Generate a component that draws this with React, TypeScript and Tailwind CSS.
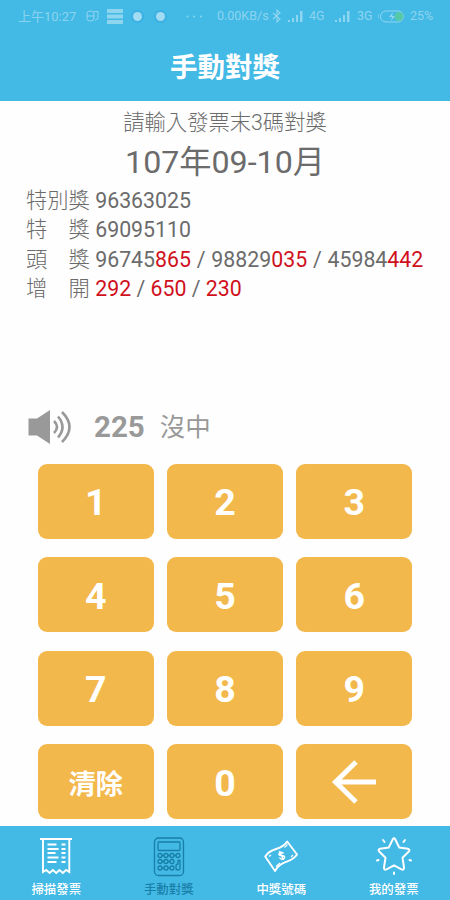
import type { ReactNode } from "react";

const keys = ["1", "2", "3", "4", "5", "6", "7", "8", "9", "清除", "0", "back"];

const Red = ({ children }: { children: ReactNode }) => <span className="text-[#d0101c]">{children}</span>;

const Slash = () => <span className="mx-[0.500px]"> / </span>;

const Signal = () => (
  <svg width="16" height="12" viewBox="0 0 16 12" fill="currentColor">
    <path d="M0 10h2v2H0zM4 8h2v4H4zM8 5h2v7H8zM12 1h2.5v11H12z" />
  </svg>
);

const StatusBar = () => (
  <div className="flex h-[32px] items-center pl-[18px] text-[13px] leading-none text-white/40">
    <span className="w-[68px] whitespace-nowrap">上午10:27</span>
    <svg className="mr-2" width="13" height="12" viewBox="0 0 13 12" fill="none" stroke="currentColor">
      <rect x="1" y="1" width="7" height="10" rx="3" />
      <path d="M1 6h7M8 1.500h4v7l-3 2" />
    </svg>
    <svg width="16" height="15" viewBox="0 0 16 15" fill="currentColor">
      <path d="M0 0h16v4H0zM0 5.500h16v4H0zM0 11h16v4H0z" />
    </svg>
    <span className="ml-[10px] h-[9px] w-[9px] rounded-full bg-white/50 ring-2 ring-[#3bb0e2]" />
    <span className="ml-[14px] h-[9px] w-[9px] rounded-full bg-white/50 ring-2 ring-[#3bb0e2]" />
    <svg className="ml-[21px]" width="17" height="3" viewBox="0 0 17 3" fill="currentColor">
      <circle cx="1.500" cy="1.500" r="1" />
      <circle cx="8" cy="1.500" r="1" />
      <circle cx="15" cy="1.500" r="1" />
    </svg>
    <span className="ml-[14px] w-[53px] whitespace-nowrap text-[12.500px]">0.00KB/s</span>
    <svg className="mr-1.5 ml-0.5" width="10" height="14" viewBox="0 0 10 14" fill="none" stroke="currentColor" strokeWidth="1.200">
      <path d="M1 4l7 6-3 3V1l3 3-7 6" />
    </svg>
    <Signal />
    <span className="ml-[5px] w-[26px] text-[12.500px]">4G</span>
    <Signal />
    <span className="ml-[6px] w-[21px] text-[12.500px]">3G</span>
    <svg width="28" height="13" viewBox="0 0 28 13" fill="none">
      <rect x="2.500" y="1" width="23" height="11" rx="5.500" stroke="currentColor" />
      <path d="M0 4v5" stroke="currentColor" />
      <circle cx="21" cy="6.500" r="4.500" fill="#55c9a9" />
      <path d="M15 2l-4 5h3l-1 4 4-5h-3z" fill="currentColor" />
    </svg>
    <span className="ml-[4px] text-[12.500px]">25%</span>
  </div>
);

const ReceiptIcon = () => (
  <svg width="34" height="40" viewBox="0 0 34 40" fill="none" stroke="currentColor" strokeWidth="1.900">
    <path d="M1 2h32M4 2v33l3.300-2 3.300 3 3.300-3 3.300 3 3.300-3 3.300 3 3.300-3 3.200 2V2" />
    <path d="M8.500 7.500h9M8.500 12h11M8.500 16h8M8.500 20.500h11M8.500 25h9" />
    <path d="M22.500 7.500h4M22.500 12h4M22.500 16h4M22.500 20.500h4M22.500 25h4" />
  </svg>
);

const CalculatorIcon = () => (
  <svg width="34" height="40" viewBox="0 0 34 40" fill="none" stroke="currentColor" strokeWidth="1.300">
    <rect x="2.500" y="1" width="29" height="37.500" rx="4" />
    <rect x="6" y="5" width="22" height="8.500" rx="1" />
    {[18.5, 24.5, 31].map((cy) =>
      [8, 14, 20].map((cx) => <circle key={`${cx}-${cy}`} cx={cx} cy={cy} r="2" />),
    )}
    <path d="M10 18.500h2M16 18.500h2M22 18.500h2M10 24.500h2M16 24.500h2M10 31h2M16 31h2" />
    <circle cx="26" cy="18.500" r="2" />
    <path d="M28 23.500v7.500a2 2 0 0 1-4 0v-2a2 2 0 0 1 2-2v-3.500z" />
  </svg>
);

const MoneyIcon = () => (
  <svg width="34" height="40" viewBox="0 0 34 40" fill="none" stroke="currentColor" strokeWidth="1.900" strokeLinejoin="round">
    <path d="M1.200 19.500C7 9.500 17 14.500 23.200 4.500L33 17.500C27 27 17 22.500 11 34Z" />
    <path d="M5 19.500l2-1.500M20.500 10.500l3-3M27 20l2-2M12 29.500l4-3.500" strokeWidth="1.200" />
    <path d="M19.500 16.500c-1.500-2-5-1-4.500 1s5 0 5.500 2.500-4 3-5 .5M15.500 14l4 9" strokeWidth="1.500" />
  </svg>
);

const StarIcon = () => (
  <svg width="38" height="40" viewBox="0 0 38 40" fill="none" stroke="currentColor" strokeWidth="2" strokeLinecap="round" strokeLinejoin="round">
    <path d="M17.800 2.200Q19 .300 20.200 2.200L24.300 10.600 32.800 11.700Q35.500 12.500 33.800 14.500L27.500 20.700 29 30.500Q29 33.500 26.500 32.300L19 28.300 11.500 32.300Q9 33.500 9 30.500L10.500 20.700 4.200 14.500Q2.500 12.500 5.200 11.700L13.700 10.600Z" />
    <path d="M8 3l1.500 2M30 3l-1.500 2M2 23.500l1.500-.5M36 23.500l-1.500-.5M19 35.500v1.500" />
  </svg>
);

const tabs = [
  { label: "掃描發票", icon: <ReceiptIcon /> },
  { label: "手動對獎", icon: <CalculatorIcon />, active: true },
  { label: "中獎號碼", icon: <MoneyIcon /> },
  { label: "我的發票", icon: <StarIcon /> },
];

const App = () => {
  return (
    <div className="flex h-[900px] w-[450px] flex-col overflow-hidden bg-[#fefefe] font-[Roboto,'Noto_Sans_CJK_TC',sans-serif] text-[#6b6b6b]">
      <header className="h-[100.500px] shrink-0 bg-[#43b9e5]">
        <StatusBar />
        <h1 className="mt-[16px] text-center text-[27.500px] leading-[40px] font-bold text-white">手動對獎</h1>
      </header>

      <section className="h-[303px] shrink-0 pt-[6px]">
        <p className="text-center text-[21.300px] leading-[32px] font-light">請輸入發票末3碼對獎</p>
        <h2 className="mt-[3px] text-center text-[32.200px] leading-[40px]">107年09-10月</h2>
        {/* Winning numbers */}
        <div className="mt-[4px] pl-[26px] text-[21.300px] leading-[29.600px] whitespace-pre">
          <p><span className="font-light">特別獎</span> 96363025</p>
          <p><span className="font-light">特　獎</span> 69095110</p>
          <p>
            <span className="font-light">頭　獎</span> 96745<Red>865</Red><Slash />98829<Red>035</Red><Slash />45984<Red>442</Red>
          </p>
          <p>
            <span className="font-light">增　開</span> <Red>292</Red> / <Red>650</Red> / <Red>230</Red>
          </p>
        </div>
      </section>

      <div className="flex h-[60px] shrink-0 items-center pb-[13px] pl-[28px] text-[#999]">
        <svg width="44" height="36" viewBox="0 0 44 36" fill="none" stroke="currentColor" strokeWidth="2.600">
          <path d="M.5 9.500H9L22 1v34L9 26.500H.5z" fill="currentColor" stroke="none" />
          <path d="M26 12q6 6 0 12M30 7.500q9 10.500 0 21M34 3q15 15 0 30" />
        </svg>
        <span className="mt-[2px] ml-[22px] text-[29.500px] leading-none font-bold">225</span>
        <span className="mt-[2px] ml-[15px] text-[25.500px] leading-none">沒中</span>
      </div>

      {/* Keypad */}
      <div className="mx-auto grid w-[375px] shrink-0 grid-cols-3 gap-x-[12.500px] gap-y-[18.500px]">
        {keys.map((key) => (
          <button
            key={key}
            type="button"
            className="flex h-[75px] items-center justify-center rounded-[9px] bg-[#f3b84b] pt-[4px] text-[37.500px] leading-none font-bold text-white"
          >
            {key === "back" ? (
              <svg className="mb-[4px]" width="46" height="44" viewBox="0 0 46 44" fill="none" stroke="currentColor" strokeWidth="5">
                <path d="M25 2L4.500 22 25 42M4 22h41" />
              </svg>
            ) : key === "清除" ? (
              <span className="mt-[3px] text-[27px]">{key}</span>
            ) : (
              key
            )}
          </button>
        ))}
      </div>

      <nav className="mt-auto grid h-[74.500px] shrink-0 grid-cols-4 bg-[#43b9e5] pt-[11px]">
        {tabs.map(({ label, icon, active }) => (
          <a key={label} className={`flex flex-col items-center ${active ? "text-[#187fa8]" : "text-white"}`}>
            {icon}
            <span className="mt-[4px] text-[12.400px] leading-[18px] font-medium">{label}</span>
          </a>
        ))}
      </nav>
    </div>
  );
};

export default App;
